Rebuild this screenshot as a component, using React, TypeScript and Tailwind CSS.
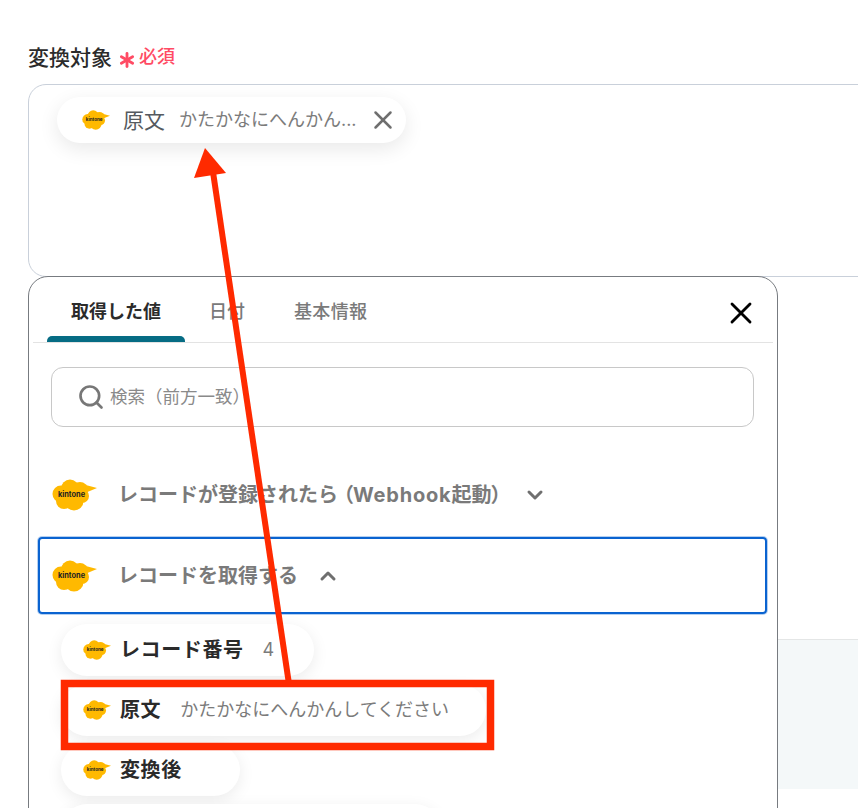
import { Asterisk, ChevronDown, ChevronUp, Search, X } from 'lucide-react'

const FONT = 'font-["Inter","Noto_Sans_CJK_JP",sans-serif]'

function KintoneLogo({ className }: { className: string }) {
  return (
    <svg viewBox="0 0 45 32" className={className}>
      <g fill="#ffb900">
        <circle cx="9" cy="15" r="8.5" />
        <circle cx="18" cy="9.500" r="9" />
        <circle cx="28" cy="11" r="8" />
        <circle cx="30" cy="17" r="7" />
        <circle cx="12" cy="22" r="8" />
        <circle cx="22" cy="22" r="9.500" />
        <path d="M30 5 L45 9 L33 14 Z" />
      </g>
      <text x="19.5" y="18" textAnchor="middle" fontSize="7.400" fontWeight="700" fill="#222" fontFamily="Inter, sans-serif">
        kintone
      </text>
    </svg>
  )
}

function ValuePill({ name, value, className }: { name: string; value?: string; className: string }) {
  return (
    <div className={`flex h-[52px] items-center rounded-full bg-white pl-[22px] shadow-[0_4px_16px_rgba(0,0,0,0.08)] ${className}`}>
      <KintoneLogo className="h-[20px] w-[28px] shrink-0" />
      <span className="ml-[9px] text-[20px] leading-none font-bold tracking-[0.03em] text-[#2a2a2a]">{name}</span>
      {value && <span className="ml-[19px] text-[18px] leading-none text-[#7b7b7b]">{value}</span>}
    </div>
  )
}

export default function App() {
  return (
    <div className={`relative h-[808px] w-[858px] overflow-hidden bg-white pt-[44px] pl-[28px] ${FONT}`}>
      {/* Label */}
      <div className="flex h-[26px] items-center">
        <span className="text-[21px] leading-none font-medium text-[#2b2b2b]">変換対象</span>
        <Asterisk className="ml-[2px] h-[26px] w-[26px] translate-y-[3px] text-[#ff4b64]" strokeWidth={2.6} />
        <span className="-ml-[1px] text-[18px] leading-none font-medium text-[#ff4b64]">必須</span>
      </div>

      {/* Input box */}
      <div className="mt-[14px] h-[193px] w-[900px] rounded-[18px] border border-[#c9d0da] bg-white pt-[12px] pl-[28px]">
        <div className="flex h-[46px] w-[349px] items-center rounded-full bg-white pl-[25px] shadow-[0_6px_20px_rgba(0,0,0,0.09)]">
          <KintoneLogo className="h-[20px] w-[28px] shrink-0" />
          <span className="ml-[13px] text-[21px] leading-none text-[#555a60]">原文</span>
          <span className="ml-[14px] text-[18px] leading-none whitespace-nowrap text-[#7b7b7b]">かたかなにへんかん...</span>
          <X className="ml-[11px] h-[30px] w-[30px] shrink-0 text-[#6f6f6f]" strokeWidth={2} />
        </div>
      </div>

      <div className="-mt-px flex">
        {/* Popup */}
        <div className="h-[600px] w-[750px] shrink-0 rounded-t-[20px] border border-[#777b80] bg-white">
          <div className="relative mx-[4px] flex h-[66px] border-b border-[#e3e3e3] pl-[38px]">
            <span className="mt-[26px] text-[18px] leading-none font-bold text-[#2b2b2b]">取得した値</span>
            <span className="mt-[26px] ml-[48px] text-[18px] leading-none font-medium text-[#7a7a7a]">日付</span>
            <span className="mt-[26px] ml-[49px] text-[18px] leading-none font-medium tracking-[0.02em] text-[#7a7a7a]">基本情報</span>
            <div className="absolute bottom-0 left-[14px] h-[6px] w-[138px] rounded-t-[5px] bg-[#066c84]" />
            <X className="absolute top-[18px] right-[14px] h-[36px] w-[36px] text-black" strokeWidth={1.9} />
          </div>

          <div className="mt-[24px] ml-[22px] flex h-[60px] w-[703px] items-center rounded-[12px] border border-[#c8c8c8] pl-[25px]">
            <Search className="h-[28px] w-[28px] text-[#777]" strokeWidth={2.3} />
            <span className="ml-[5px] text-[17.5px] leading-none text-[#8a8a8a]">検索（前方一致）</span>
          </div>

          <div className="mt-[32px] ml-[23px] flex h-[72px] items-center">
            <KintoneLogo className="h-[32px] w-[45px] shrink-0" />
            <span className="ml-[21px] text-[20px] leading-none font-bold whitespace-nowrap text-[#7a7a7a]">
              レコードが登録されたら
              <span className="ml-[5px] [font-feature-settings:'palt']">（</span>
              <span className="tracking-[0.04em]">Webhook</span>
              起動
              <span className="[font-feature-settings:'palt']">）</span>
            </span>
            <ChevronDown className="ml-[22px] h-[24px] w-[24px] shrink-0 text-[#6f6f6f]" strokeWidth={3} />
          </div>

          <div className="mt-[6px] ml-[9px] flex h-[77px] w-[729px] items-center rounded-[4px] border-2 border-[#0a63d0] pl-[12px] shadow-[0_0_0_1px_rgba(10,99,208,0.3)]">
            <KintoneLogo className="h-[32px] w-[45px] shrink-0" />
            <span className="ml-[21px] text-[20px] leading-none font-bold text-[#7a7a7a]">レコードを取得する</span>
            <ChevronUp className="ml-[18px] h-[24px] w-[24px] text-[#6f6f6f]" strokeWidth={3} />
          </div>

          <div className="mt-[10px] ml-[32px] flex flex-col gap-[8px]">
            <ValuePill name="レコード番号" value="4" className="w-[253px]" />
            <ValuePill name="原文" value="かたかなにへんかんしてください" className="w-[425px]" />
            <ValuePill name="変換後" className="w-[179px]" />
            <div className="h-[52px] w-[380px] rounded-full bg-white shadow-[0_4px_16px_rgba(0,0,0,0.08)]" />
          </div>
        </div>

        {/* Panel to the right of the popup */}
        <div className="mt-[363px] h-[150px] w-[100px] border-t border-[#e4e6e6] bg-[#f4f8f9]" />
      </div>

      {/* Annotation drawn over the page */}
      <svg className="absolute inset-0" width="858" height="808" viewBox="0 0 858 808">
        <path d="M289 684 L213 172" stroke="#ff2a00" strokeWidth="6" fill="none" />
        <path d="M205 148 L194 178 L226 173 Z" fill="#ff2a00" />
        <rect x="64.500" y="683.500" width="426" height="63" stroke="#ff2a00" strokeWidth="7.500" fill="none" />
      </svg>
    </div>
  )
}
